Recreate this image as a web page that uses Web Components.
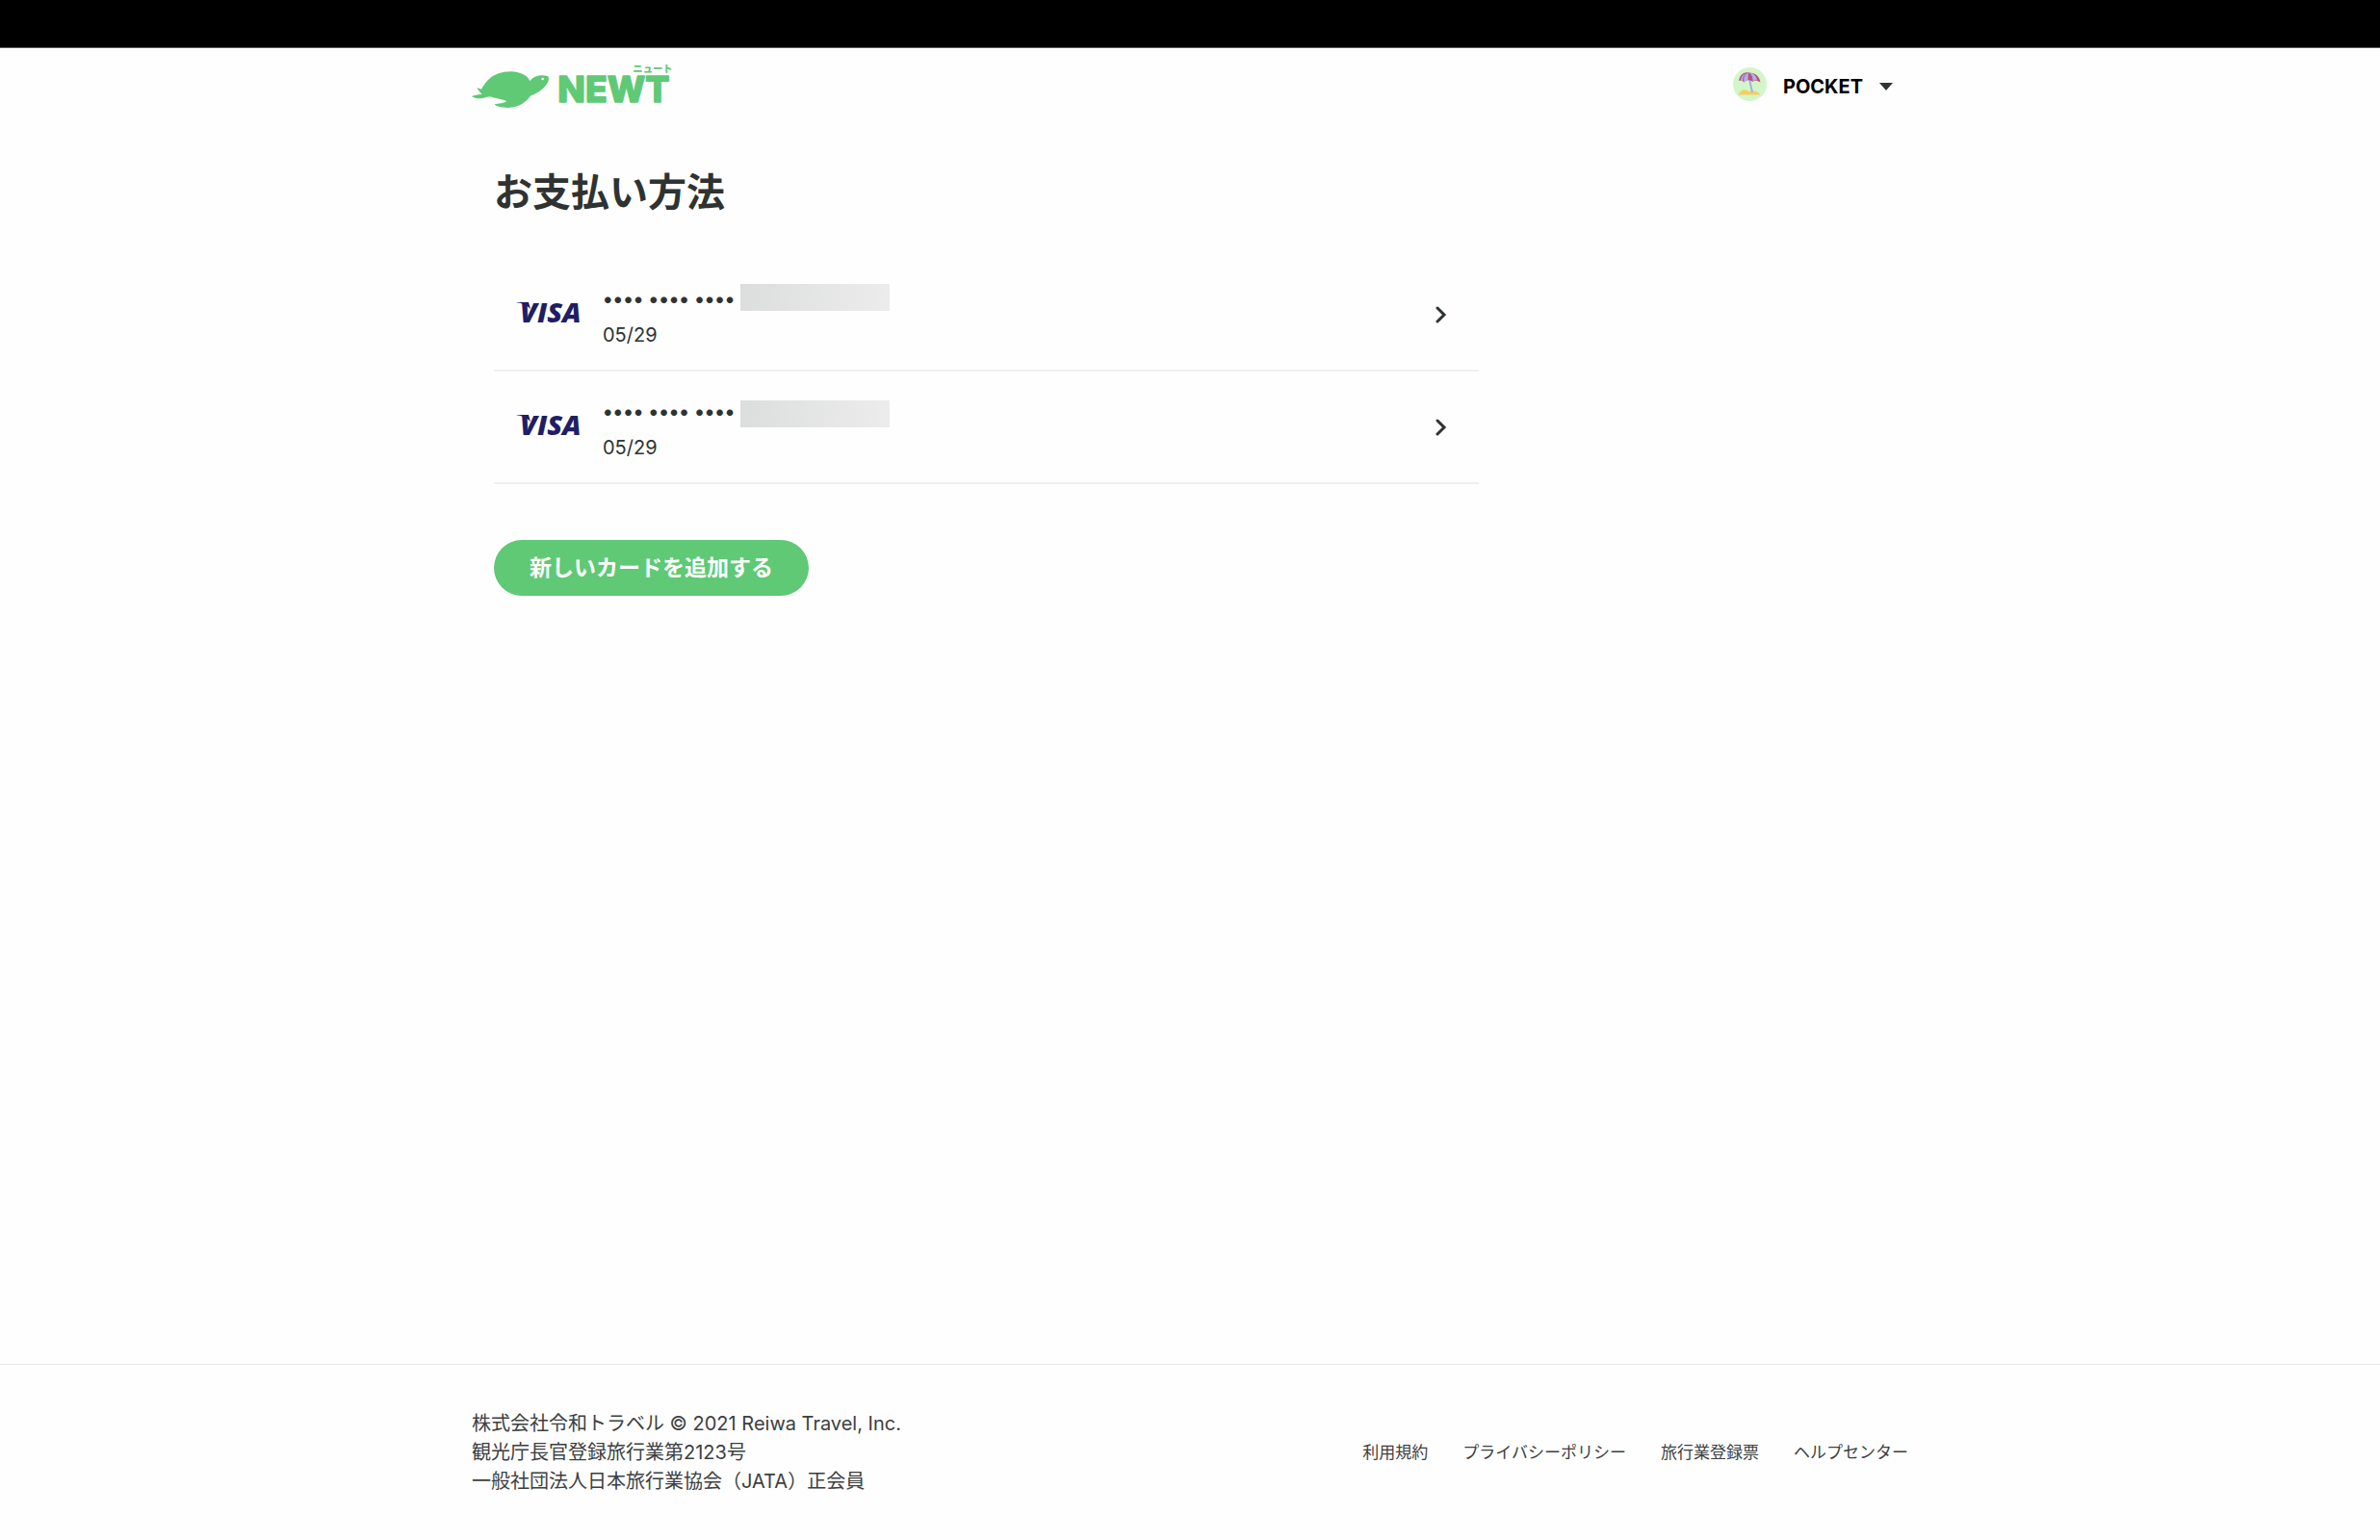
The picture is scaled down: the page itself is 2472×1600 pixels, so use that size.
<!DOCTYPE html>
<html lang="ja">
<head>
<meta charset="utf-8">
<title>お支払い方法 | NEWT</title>
<style>
body {
  margin: 0;
  background: #fefefe;
  color: #2e3332;
  font-family: Inter, "Noto Sans CJK JP", sans-serif;
  font-size: 20px;
  line-height: 30px;
}
</style>
</head>
<body>
<newt-app></newt-app>

<script>
const define = (name, html) => {
  const template = document.createElement("template")
  template.innerHTML = html
  customElements.define(name, class extends HTMLElement {
    constructor() {
      super()
      this.attachShadow({mode: "open"}).append(template.content.cloneNode(true))
    }
  })
}

define("newt-logo", /*html*/`
<style>
:host { display: block; }
a { display: block; }
svg { display: block; fill: #5fc975; }
.name { font: 800 112px Inter, sans-serif; stroke: #5fc975; stroke-width: 4; stroke-linejoin: round; }
.kana { font: 900 31px "Noto Sans CJK JP", sans-serif; }
</style>
<a href="#" aria-label="NEWT">
<svg width="220" height="60" viewBox="60 90 660 180">
  <path d="M60 211C68 206 78 205 92 204C86 198 80 191 76 183L90 188C107 155 135 133 182 133C214 134 236 147 241 163C253 146 275 140 298 148C303 157 298 168 288 179C274 195 257 203 244 208C229 228 210 245 172 246C150 246 135 241 131 235C145 232 160 232 168 226C160 218 140 219 122 212C113 211 105 212 98 215C85 219 70 217 60 211Z"/>
  <circle cx="281" cy="156" r="4" fill="#fff"/>
  <text class="name" x="328" y="229">NEWT</text>
  <text class="kana" x="562" y="136">ニュート</text>
</svg>
</a>
`)

define("user-menu", /*html*/`
<style>
:host { display: block; }
button {
  display: flex;
  align-items: flex-start;
  gap: 17px;
  padding: 0;
  border: 0;
  background: none;
  color: #000;
  font: inherit;
  font-weight: 700;
  line-height: 40px;
}
svg { display: block; }
.caret { align-self: center; }
</style>
<button type="button" aria-haspopup="true">
  <svg width="35" height="35" viewBox="0 0 70 70">
    <circle cx="35" cy="35" r="35" fill="#d3f6c8"/>
    <path d="M11 57C17 45 27 44 34 51C44 46 53 51 57 57Z" fill="#f3cf63"/>
    <path d="M34 24L40 52" stroke="#9db4e8" stroke-width="4"/>
    <path d="M12 28C14 15 23 9 33 11C46 11 55 18 57 31C49 26 44 27 41 30C34 25 27 26 23 31C19 26 15 26 12 28Z" fill="#c0507c"/>
    <path d="M23 31C21 21 25 14 32 11C32 16 31 21 31 26C28 27 25 28 23 31ZM41 30C42 22 39 15 34 11C44 12 49 19 50 27C46 26 43 27 41 30ZM16 26C17 19 22 14 27 12C22 17 20 22 20 28Z" fill="#a8b4ee"/>
  </svg>
  <span>POCKET</span>
  <svg class="caret" width="14" height="8" viewBox="0 0 14 8"><path d="M0 0H14L7 8Z" fill="#2e3332"/></svg>
</button>
`)

define("site-header", /*html*/`
<style>
:host { display: block; }
.strip { height: 49px; border-bottom: 1px solid #555; background: #000; }
header {
  display: flex;
  align-items: center;
  justify-content: space-between;
  box-sizing: border-box;
  max-width: 1492px;
  height: 80px;
  margin: 0 auto;
  padding-right: 16px;
}
</style>
<div class="strip"></div>
<header>
  <newt-logo></newt-logo>
  <user-menu></user-menu>
</header>
`)

define("payment-card", /*html*/`
<style>
:host { display: block; border-bottom: 2px solid #f0f0f0; }
button {
  display: flex;
  align-items: center;
  gap: 22px;
  width: 100%;
  height: 115px;
  padding: 0 33px 0 23px;
  border: 0;
  background: none;
  color: inherit;
  font: inherit;
  text-align: left;
}
svg { display: block; flex: none; }
.brand { font: italic 800 29px "Open Sans", sans-serif; fill: #1f1e66; }
.info { display: flex; flex: 1; flex-direction: column; gap: 6px; padding-top: 4px; }
.number { display: flex; gap: 6px; height: 32px; font-size: 21px; line-height: 32px; font-weight: 600; }
.mask { width: 155px; height: 28px; background: linear-gradient(90deg, #dcdedd, #ececec); }
:host([low]) .mask { align-self: flex-end; }
</style>
<button type="button">
  <svg width="68" height="48" viewBox="0 0 68 48" role="img" aria-label="VISA">
    <path d="M0 11H13L15 18C10 13 5 12 0 11Z" fill="#1f1e66"/>
    <text class="brand" x="4" y="32">VISA</text>
  </svg>
  <span class="info">
    <span class="number"><slot></slot><span class="mask"></span></span>
    <slot name="expiry"></slot>
  </span>
  <svg width="12" height="18" viewBox="0 0 12 18"><path d="M2 2L9 9 2 16" fill="none" stroke="#2e3332" stroke-width="3" stroke-linecap="round"/></svg>
</button>
`)

define("payment-methods", /*html*/`
<style>
:host { display: block; box-sizing: border-box; width: 100%; max-width: 1492px; margin: 0 auto; padding: 40px 23px; }
h1 { margin: 0 0 39px; font-size: 40px; line-height: 60px; font-weight: 700; }
.list { max-width: 1023px; }
.add {
  height: 58px;
  margin-top: 58px;
  padding: 0 37px;
  border: 0;
  border-radius: 29px;
  background: #5fc975;
  color: #fff;
  font: inherit;
  font-size: 23px;
  font-weight: 700;
}
</style>
<h1>お支払い方法</h1>
<div class="list">
  <payment-card>•••• •••• ••••<span slot="expiry">05/29</span></payment-card>
  <payment-card low>•••• •••• ••••<span slot="expiry">05/29</span></payment-card>
</div>
<button class="add" type="button">新しいカードを追加する</button>
`)

define("site-footer", /*html*/`
<style>
:host { display: block; border-top: 1px solid #e6e8e7; color: #3c403f; }
footer {
  display: flex;
  align-items: center;
  justify-content: space-between;
  max-width: 1492px;
  margin: 0 auto;
  padding: 46px 0;
}
p { margin: 0; }
nav { display: flex; gap: 36px; font-size: 17px; }
a { color: inherit; text-decoration: none; }
</style>
<footer>
  <p>株式会社令和トラベル © 2021 Reiwa Travel, Inc.<br>観光庁長官登録旅行業第2123号<br>一般社団法人日本旅行業協会（JATA）正会員</p>
  <nav>
    <a href="#">利用規約</a>
    <a href="#">プライバシーポリシー</a>
    <a href="#">旅行業登録票</a>
    <a href="#">ヘルプセンター</a>
  </nav>
</footer>
`)

define("newt-app", /*html*/`
<style>
:host { display: flex; flex-direction: column; min-height: 100vh; }
main { flex: 1; }
</style>
<site-header></site-header>
<main><payment-methods></payment-methods></main>
<site-footer></site-footer>
`)
</script>
</body>
</html>
